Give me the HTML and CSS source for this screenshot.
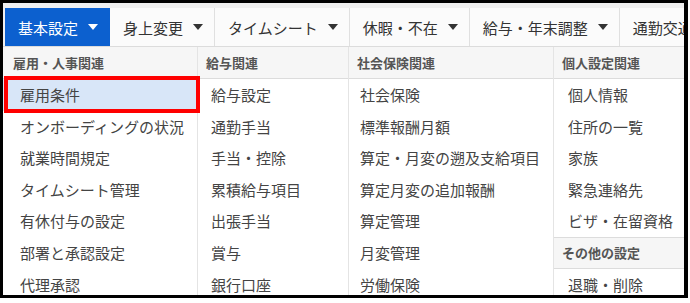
FILE: index.html
```html
<!DOCTYPE html>
<html lang="ja">
<head>
    <meta charset="UTF-8">
    <title>基本設定</title>
    <link rel="stylesheet" href="styles.css">
</head>
<body>
    <div class="frame">
        <div class="menubar">
            <a href="javascript:;" class="menu on">基本設定<span class="caret"></span></a>
            <a href="javascript:;" class="menu">身上変更<span class="caret"></span></a>
            <a href="javascript:;" class="menu">タイムシート<span class="caret"></span></a>
            <a href="javascript:;" class="menu">休暇・不在<span class="caret"></span></a>
            <a href="javascript:;" class="menu">給与・年末調整<span class="caret"></span></a>
            <a href="javascript:;" class="menu">通勤交通費<span class="caret"></span></a>
        </div>
        <div class="panel">
            <div class="col col1">
                <div class="col-head">雇用・人事関連</div>
                <ul class="links">
                    <li class="sel">雇用条件</li>
                    <li>オンボーディングの状況</li>
                    <li>就業時間規定</li>
                    <li>タイムシート管理</li>
                    <li>有休付与の設定</li>
                    <li>部署と承認設定</li>
                    <li>代理承認</li>
                </ul>
            </div>
            <div class="col col2">
                <div class="col-head">給与関連</div>
                <ul class="links">
                    <li>給与設定</li>
                    <li>通勤手当</li>
                    <li>手当・控除</li>
                    <li>累積給与項目</li>
                    <li>出張手当</li>
                    <li>賞与</li>
                    <li>銀行口座</li>
                </ul>
            </div>
            <div class="col col3">
                <div class="col-head">社会保険関連</div>
                <ul class="links">
                    <li>社会保険</li>
                    <li>標準報酬月額</li>
                    <li>算定・月変の遡及支給項目</li>
                    <li>算定月変の追加報酬</li>
                    <li>算定管理</li>
                    <li>月変管理</li>
                    <li>労働保険</li>
                </ul>
            </div>
            <div class="col col4">
                <div class="col-head">個人設定関連</div>
                <ul class="links">
                    <li>個人情報</li>
                    <li>住所の一覧</li>
                    <li>家族</li>
                    <li>緊急連絡先</li>
                    <li>ビザ・在留資格</li>
                </ul>
                <div class="col-head sub">その他の設定</div>
                <ul class="links">
                    <li>退職・削除</li>
                </ul>
            </div>
        </div>
    </div>
</body>
</html>
```

FILE: styles.css
```css
*{
    margin: 0;
    padding: 0;
    box-sizing: border-box;
    list-style: none;
}
body{
    background: #fff;
    font-family: "Noto Sans CJK JP", "Noto Sans", sans-serif;
    color: #444;
}
.frame{
    width: 688px;
    height: 298px;
    border: 3px solid #000;
    border-right-width: 4px;
    overflow: hidden;
    background: #fff;
}

/* top menu */
.menubar{
    display: flex;
    height: 44px;
    padding: 5px 0 0 2px;
    background: #efefef;
    border-bottom: 1px solid #dcdcdc;
}
.menu{
    display: flex;
    align-items: center;
    gap: 10px;
    padding: 0 11px 0 13px;
    background: #fbfbfb;
    border-right: 1px solid #e0e0e0;
    font-size: 15px;
    color: #333;
    text-decoration: none;
    white-space: nowrap;
    flex-shrink: 0;
}
.menu.on{
    background: #0c60cf;
    color: #fff;
    border-right-color: #0c60cf;
}
.caret{
    width: 0;
    height: 0;
    border-left: 5px solid transparent;
    border-right: 5px solid transparent;
    border-top: 6px solid currentColor;
}
.menu .caret{
    color: #333;
}
.menu.on .caret{
    color: #fff;
}

/* dropdown panel */
.panel{
    display: grid;
    grid-template-columns: 194px 151px 205px 1fr;
}
.col{
    border-left: 1px solid #e4e4e4;
}
.col1{
    border-left: 0;
}
.col-head{
    height: 32px;
    display: flex;
    align-items: center;
    padding-left: 8px;
    font-size: 13px;
    font-weight: bold;
    color: #555;
    background: #f6f6f6;
    border-bottom: 1px solid #dcdcdc;
}
.col1 .col-head{
    padding-left: 10px;
}
.col-head.sub{
    border-top: 1px solid #dcdcdc;
}
.links li{
    height: 31.6px;
    line-height: 31.6px;
    font-size: 15px;
    color: #444;
    white-space: nowrap;
}
.col1 .links li{
    padding-left: 17px;
}
.col2 .links li{
    padding-left: 13px;
}
.col3 .links li{
    padding-left: 11px;
}
.col4 .links li{
    padding-left: 14px;
}
.links li.sel{
    position: relative;
    background: #d8e6f8;
}
.links li.sel::after{
    content: '';
    position: absolute;
    left: 1px;
    right: -3px;
    top: -3px;
    bottom: -2px;
    border: 4px solid #f00;
}
```
